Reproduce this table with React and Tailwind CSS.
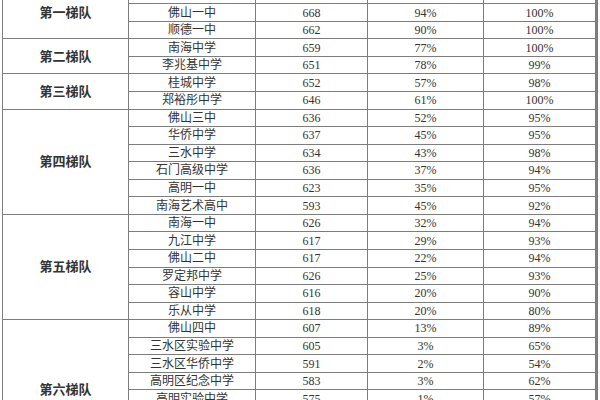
const groups = [
  {
    name: "第一梯队",
    rows: [
      ["石门中学", "676", "96%", "100%"],
      ["佛山一中", "668", "94%", "100%"],
      ["顺德一中", "662", "90%", "100%"],
    ],
  },
  {
    name: "第二梯队",
    rows: [
      ["南海中学", "659", "77%", "100%"],
      ["李兆基中学", "651", "78%", "99%"],
    ],
  },
  {
    name: "第三梯队",
    rows: [
      ["桂城中学", "652", "57%", "98%"],
      ["郑裕彤中学", "646", "61%", "100%"],
    ],
  },
  {
    name: "第四梯队",
    rows: [
      ["佛山三中", "636", "52%", "95%"],
      ["华侨中学", "637", "45%", "95%"],
      ["三水中学", "634", "43%", "98%"],
      ["石门高级中学", "636", "37%", "94%"],
      ["高明一中", "623", "35%", "95%"],
      ["南海艺术高中", "593", "45%", "92%"],
    ],
  },
  {
    name: "第五梯队",
    rows: [
      ["南海一中", "626", "32%", "94%"],
      ["九江中学", "617", "29%", "93%"],
      ["佛山二中", "617", "22%", "94%"],
      ["罗定邦中学", "626", "25%", "93%"],
      ["容山中学", "616", "20%", "90%"],
      ["乐从中学", "618", "20%", "80%"],
    ],
  },
  {
    name: "第六梯队",
    rows: [
      ["佛山四中", "607", "13%", "89%"],
      ["三水区实验中学", "605", "3%", "65%"],
      ["三水区华侨中学", "591", "2%", "54%"],
      ["高明区纪念中学", "583", "3%", "62%"],
      ["高明实验中学", "575", "1%", "57%"],
      ["顺德实验中学", "571", "1%", "50%"],
      ["北滘中学", "568", "1%", "48%"],
      ["均安中学", "560", "0%", "41%"],
    ],
  },
];

const spans = {
  2: "row-span-2",
  3: "row-span-3",
  6: "row-span-6",
  8: "row-span-8",
};

export default function App() {
  return (
    <div className="w-[600px] h-[400px] overflow-hidden bg-white font-['Liberation_Serif','Noto_Sans_CJK_SC',serif] text-[#333]">
      <div className="ml-[2px] -mt-[14.25px] w-[596px] grid grid-cols-[125px_126px_111px_115px_111px] grid-rows-[repeat(27,16.55px)] gap-px p-px bg-[#7d7d7d]">
        {groups.map((g) => (
          <>
            <div
              key={g.name}
              className={`${spans[g.rows.length]} bg-white flex items-center justify-center text-[13px] font-bold`}
            >
              {g.name}
            </div>
            {g.rows.map((r) =>
              r.map((cell, i) => (
                <div
                  key={g.name + r[0] + i}
                  className="bg-white flex items-center justify-center text-[12px] leading-none"
                >
                  {cell}
                </div>
              ))
            )}
          </>
        ))}
      </div>
    </div>
  );
}
